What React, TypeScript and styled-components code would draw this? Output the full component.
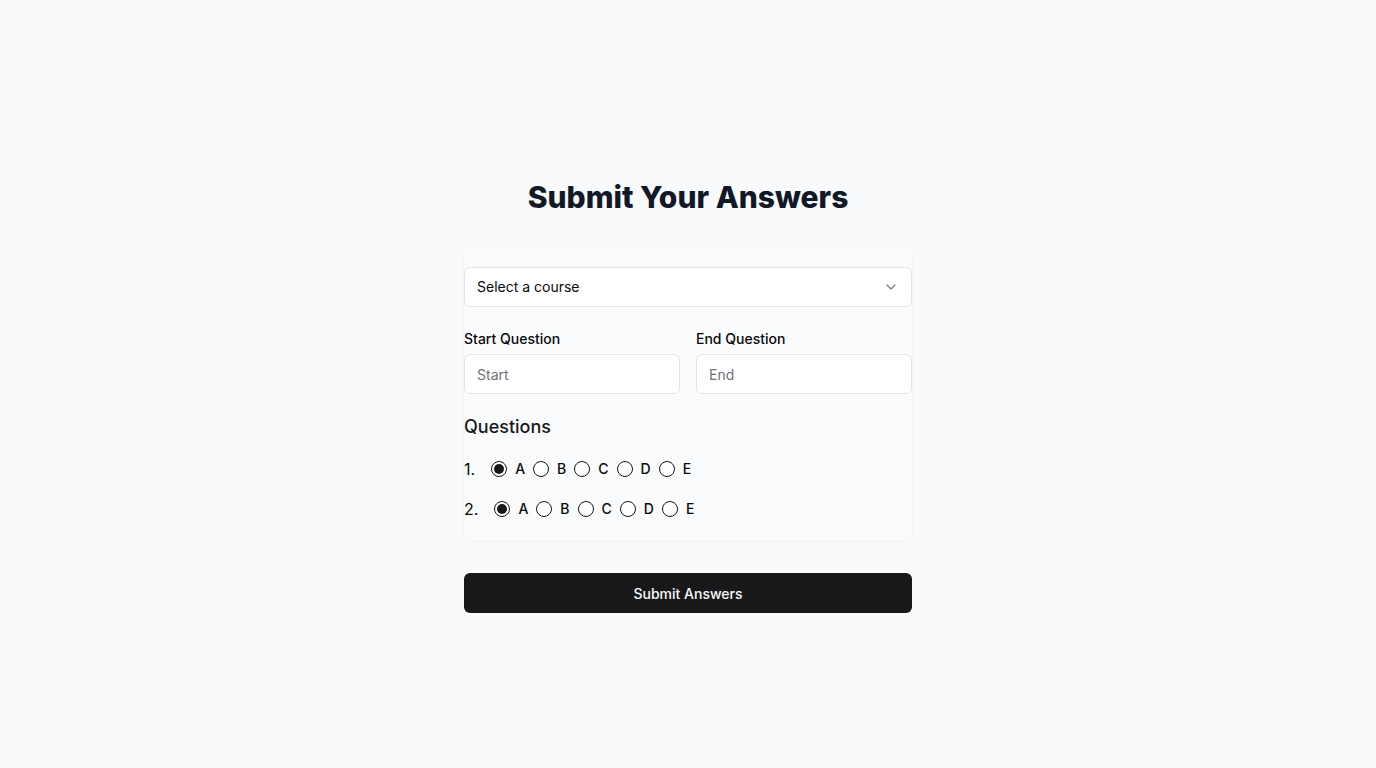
import React, { useState } from "react";
import styled, { createGlobalStyle } from "styled-components";
import { ChevronDown } from "lucide-react";

const GlobalStyle = createGlobalStyle`
  * { box-sizing: border-box; }
  html, body { margin: 0; padding: 0; }
  body {
    background: #f9fafb;
    font-family: Inter, "Liberation Sans", sans-serif;
    color: #09090b;
    -webkit-font-smoothing: antialiased;
  }
`;

const Page = styled.main`
  min-height: 768px;
  display: flex;
  justify-content: center;
  padding-top: 179px;
`;

const Column = styled.div`
  width: 448px;
  display: flex;
  flex-direction: column;
`;

const Title = styled.h1`
  margin: 0 0 32px;
  font-size: 30px;
  line-height: 36px;
  font-weight: 800;
  color: #111827;
  text-align: center;
`;

const Card = styled.section`
  border-radius: 8px;
  box-shadow: 0 0 0 1px #f3f4f6;
  background: #fafbfc;
  padding: 20px 0 20px;
  display: flex;
  flex-direction: column;
`;

const SelectBox = styled.button`
  height: 40px;
  width: 100%;
  display: flex;
  align-items: center;
  justify-content: space-between;
  padding: 0 12px 1px;
  border: 1px solid #e4e4e7;
  border-radius: 6px;
  background: #ffffff;
  font-family: inherit;
  font-size: 14px;
  color: #09090b;
  cursor: pointer;
  svg { opacity: 0.5; margin-top: 1px; }
`;

const Fields = styled.div`
  display: grid;
  grid-template-columns: 1fr 1fr;
  gap: 16px;
  margin-top: 22px;
`;

const Field = styled.div`
  display: flex;
  flex-direction: column;
  gap: 5px;
`;

const Label = styled.label`
  font-size: 14px;
  line-height: 20px;
  font-weight: 500;
  color: #09090b;
`;

const TextInput = styled.input`
  height: 40px;
  width: 100%;
  padding: 0 12px;
  border: 1px solid #e4e4e7;
  border-radius: 6px;
  background: #ffffff;
  font-family: inherit;
  font-size: 14px;
  color: #09090b;
  outline: none;
  &::placeholder { color: #71717a; }
`;

const SectionTitle = styled.h2`
  margin: 19px 0 16px;
  font-size: 18px;
  line-height: 28px;
  font-weight: 500;
  color: #18181b;
`;

const QuestionList = styled.div`
  display: flex;
  flex-direction: column;
  gap: 16px;
`;

const QuestionRow = styled.div`
  display: flex;
  align-items: center;
  height: 24px;
`;

const Number = styled.span`
  font-size: 16px;
  line-height: 24px;
  margin-right: 16px;
  color: #09090b;
`;

const Options = styled.div`
  display: flex;
  align-items: center;
  gap: 8px;
`;

const Option = styled.label`
  display: flex;
  align-items: center;
  gap: 8px;
  font-size: 14px;
  font-weight: 500;
  line-height: 20px;
  cursor: pointer;
  color: #09090b;
`;

const Radio = styled.span<{ $checked: boolean }>`
  width: 16px;
  height: 16px;
  border-radius: 50%;
  border: 1px solid #18181b;
  background: #ffffff;
  display: flex;
  align-items: center;
  justify-content: center;
  &::after {
    content: "";
    width: 10px;
    height: 10px;
    border-radius: 50%;
    background: #18181b;
    display: ${(p) => (p.$checked ? "block" : "none")};
  }
`;

const SubmitButton = styled.button`
  margin-top: 32px;
  height: 40px;
  width: 100%;
  border: none;
  border-radius: 6px;
  background: #18181b;
  color: #fafafa;
  font-family: inherit;
  font-size: 14px;
  font-weight: 500;
  padding-bottom: 1px;
  cursor: pointer;
`;

const LETTERS = ["A", "B", "C", "D", "E"];

export default function App() {
  const [answers, setAnswers] = useState<Record<number, string>>({ 1: "A", 2: "A" });

  return (
    <>
      <GlobalStyle />
      <Page>
        <Column>
          <Title>Submit Your Answers</Title>
          <Card>
            <SelectBox type="button">
              <span>Select a course</span>
              <ChevronDown size={16} strokeWidth={2} />
            </SelectBox>
            <Fields>
              <Field>
                <Label>Start Question</Label>
                <TextInput placeholder="Start" />
              </Field>
              <Field>
                <Label>End Question</Label>
                <TextInput placeholder="End" />
              </Field>
            </Fields>
            <SectionTitle>Questions</SectionTitle>
            <QuestionList>
              {[1, 2].map((q) => (
                <QuestionRow key={q}>
                  <Number>{q}.</Number>
                  <Options>
                    {LETTERS.map((l) => (
                      <Option key={l} onClick={() => setAnswers({ ...answers, [q]: l })}>
                        <Radio $checked={answers[q] === l} />
                        {l}
                      </Option>
                    ))}
                  </Options>
                </QuestionRow>
              ))}
            </QuestionList>
          </Card>
          <SubmitButton type="button">Submit Answers</SubmitButton>
        </Column>
      </Page>
    </>
  );
}
